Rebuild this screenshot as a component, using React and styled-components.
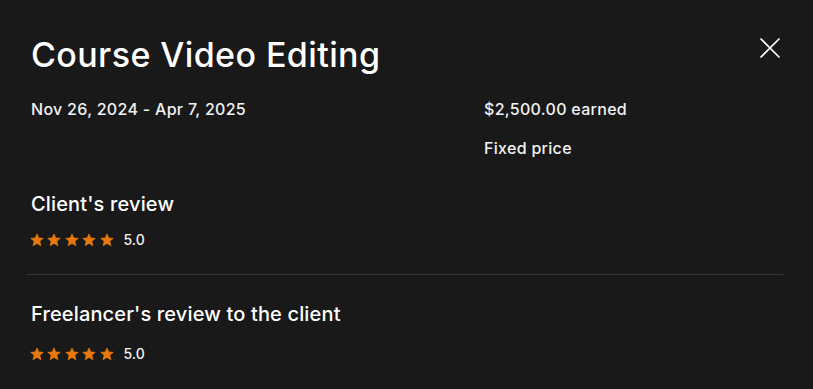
import React from "react";
import styled, { createGlobalStyle } from "styled-components";

const Global = createGlobalStyle`
  html, body { margin: 0; padding: 0; background: #191919; }
  body { font-family: Inter, "Liberation Sans", Arial, sans-serif; color: #fff; }
`;

const Modal = styled.div`
  width: 813px;
  height: 389px;
  box-sizing: border-box;
  padding: 26px 30px 0 31px;
  background: #191919;
  position: relative;
  overflow: hidden;
`;

const Title = styled.h1`
  margin: 0;
  font-size: 34px;
  font-weight: 500;
  line-height: 58px;
  letter-spacing: 0.4px;
  color: #fff;
`;

const Close = styled.button`
  position: absolute;
  top: 37px;
  right: 32px;
  width: 22px;
  height: 22px;
  padding: 0;
  border: 0;
  background: none;
  color: #fff;
  cursor: pointer;
  display: flex;
  align-items: center;
  justify-content: center;
`;

const Meta = styled.div`
  display: grid;
  grid-template-columns: 453px 1fr;
  margin-top: 14.5px;
`;

const Col = styled.div`
  display: flex;
  flex-direction: column;
  gap: 19px;
`;

const MetaText = styled.div`
  font-size: 16px;
  line-height: 20px;
  font-weight: 500;
  letter-spacing: 0.3px;
  color: #f2f2f2;
`;

const Section = styled.section`
  padding: ${(p) => p.$pad};
  border-bottom: ${(p) => (p.$divider ? "1px solid #353535" : "none")};
  margin-left: ${(p) => (p.$divider ? "-5px" : "0")};
  padding-left: ${(p) => (p.$divider ? "5px" : "0")};
`;

const SectionTitle = styled.h2`
  margin: 0;
  font-size: 20px;
  line-height: 24px;
  font-weight: 500;
  letter-spacing: 0.15px;
  color: #fff;
`;

const Rating = styled.div`
  display: flex;
  align-items: center;
  margin-top: ${(p) => p.$top};
  margin-left: -1.5px;
  gap: 10px;
`;

const Stars = styled.div`
  display: flex;
  gap: 3.5px;
`;

const Score = styled.span`
  font-size: 14px;
  line-height: 16px;
  font-weight: 500;
  color: #f2f2f2;
`;

const Star = () => (
  <svg width="14" height="14" viewBox="0 0 24 24">
    <path
      fill="#e8790f"
      stroke="#e8790f"
      strokeWidth="1.2"
      strokeLinejoin="round"
      d="M12 1.5l3.1 7 7.6.7-5.8 5 1.8 7.6L12 17.8l-6.7 4 1.8-7.6-5.8-5 7.6-.7z"
    />
  </svg>
);

const RatingRow = ({ value, top }) => (
  <Rating $top={top}>
    <Stars>
      {[0, 1, 2, 3, 4].map((i) => (
        <Star key={i} />
      ))}
    </Stars>
    <Score>{value}</Score>
  </Rating>
);

export default function App() {
  return (
    <>
      <Global />
      <Modal>
        <Title>Course Video Editing</Title>
        <Close aria-label="Close">
          <svg width="22" height="22" viewBox="0 0 22 22">
            <path d="M1.5 1.5L20.5 20.5M20.5 1.5L1.5 20.5" stroke="#fff" strokeWidth="1.6" />
          </svg>
        </Close>
        <Meta>
          <Col>
            <MetaText>Nov 26, 2024 - Apr 7, 2025</MetaText>
          </Col>
          <Col>
            <MetaText>$2,500.00 earned</MetaText>
            <MetaText>Fixed price</MetaText>
          </Col>
        </Meta>
        <Section $pad="34px 0 26px" $divider>
          <SectionTitle>Client's review</SectionTitle>
          <RatingRow value="5.0" top="16px" />
        </Section>
        <Section $pad="27.5px 0 0">
          <SectionTitle>Freelancer's review to the client</SectionTitle>
          <RatingRow value="5.0" top="20px" />
        </Section>
      </Modal>
    </>
  );
}
